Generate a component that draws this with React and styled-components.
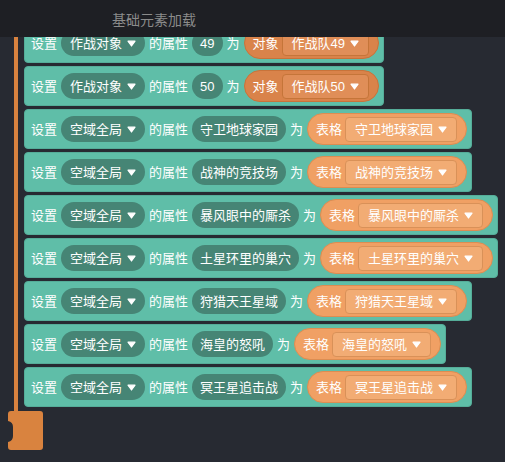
import React from "react";
import styled, { createGlobalStyle } from "styled-components";

const Global = createGlobalStyle`
  html, body { margin: 0; padding: 0; background: #272a32; }
  body { font-family: "Liberation Sans", "Noto Sans CJK SC", sans-serif; }
  * { box-sizing: border-box; }
`;

const Page = styled.div`
  width: 505px;
  height: 462px;
  display: flex;
  flex-direction: column;
  background: #272a32;
  overflow: hidden;
`;

const Header = styled.div`
  height: 37px;
  flex: none;
  background: #1e1f24;
  display: flex;
  align-items: center;
  padding-left: 112px;
  color: #8b8b8b;
  font-size: 14px;
  font-family: "Noto Sans CJK SC", sans-serif;
`;

const Viewport = styled.div`
  flex: 1;
  overflow: hidden;
  position: relative;
`;

const Canvas = styled.div`
  margin-top: -14px;
  padding-left: 14px;
  display: flex;
  flex-direction: column;
  align-items: flex-start;
`;

const Rail = styled.div`
  border-left: 4px solid #d9823f;
  padding-left: 6px;
  padding-bottom: 4px;
  display: flex;
  flex-direction: column;
  align-items: flex-start;
  gap: 3px;
`;

const Cap = styled.svg`
  display: block;
  margin-left: -6px;
`;

const Block = styled.div`
  height: 40px;
  display: inline-flex;
  align-items: center;
  gap: 4px;
  padding: 0 4px 0 6px;
  background: #5fbea8;
  border: 1px solid #55ad99;
  border-radius: 4px;
  color: #ffffff;
  font-size: 13px;
  font-family: "Liberation Sans", "Noto Sans CJK SC", sans-serif;
  white-space: nowrap;
`;

const Label = styled.span`
  line-height: 1;
`;

const DarkPill = styled.span`
  height: 26px;
  display: inline-flex;
  align-items: center;
  gap: 5px;
  padding: ${(p) => (p.$drop ? "0 9px 0 9px" : "0 8px")};
  background: #468575;
  border-radius: 13px;
  line-height: 1;
`;

const tones = {
  object: { bg: "#d9834a", border: "#c8733a", inner: "#e08e58", innerBorder: "#c57539" },
  table: { bg: "#f0a064", border: "#dc8d52", inner: "#f2ac74", innerBorder: "#d99158" },
};

const ValuePill = styled.span`
  height: 32px;
  display: inline-flex;
  align-items: center;
  gap: 3px;
  padding: 0 9px 0 8px;
  background: ${(p) => tones[p.$tone].bg};
  border: 1px solid ${(p) => tones[p.$tone].border};
  border-radius: 16px;
  line-height: 1;
`;

const InnerBox = styled.span`
  height: 25px;
  display: inline-flex;
  align-items: center;
  gap: 5px;
  padding: 0 9px 0 9px;
  background: ${(p) => tones[p.$tone].inner};
  border: 1px solid ${(p) => tones[p.$tone].innerBorder};
  border-radius: 4px;
  line-height: 1;
`;

const Arrow = () => (
  <svg width="9" height="7" viewBox="0 0 9 7">
    <path d="M1 1.2 H8 L4.5 6 Z" fill="#fff" stroke="#fff" strokeWidth="1.2" strokeLinejoin="round" />
  </svg>
);

const rows = [
  { target: "作战对象", prop: "49", kind: "对象", tone: "object", val: "作战队49" },
  { target: "作战对象", prop: "50", kind: "对象", tone: "object", val: "作战队50" },
  { target: "空域全局", prop: "守卫地球家园", kind: "表格", tone: "table", val: "守卫地球家园" },
  { target: "空域全局", prop: "战神的竞技场", kind: "表格", tone: "table", val: "战神的竞技场" },
  { target: "空域全局", prop: "暴风眼中的厮杀", kind: "表格", tone: "table", val: "暴风眼中的厮杀" },
  { target: "空域全局", prop: "土星环里的巢穴", kind: "表格", tone: "table", val: "土星环里的巢穴" },
  { target: "空域全局", prop: "狩猎天王星域", kind: "表格", tone: "table", val: "狩猎天王星域" },
  { target: "空域全局", prop: "海皇的怒吼", kind: "表格", tone: "table", val: "海皇的怒吼" },
  { target: "空域全局", prop: "冥王星追击战", kind: "表格", tone: "table", val: "冥王星追击战" },
];

export default function App() {
  return (
    <Page>
      <Global />
      <Header>基础元素加载</Header>
      <Viewport>
        <Canvas>
          <Rail>
            {rows.map((r, i) => (
              <Block key={i}>
                <Label>设置</Label>
                <DarkPill $drop>
                  {r.target}
                  <Arrow />
                </DarkPill>
                <Label>的属性</Label>
                <DarkPill>{r.prop}</DarkPill>
                <Label>为</Label>
                <ValuePill $tone={r.tone}>
                  {r.kind}
                  <InnerBox $tone={r.tone}>
                    {r.val}
                    <Arrow />
                  </InnerBox>
                </ValuePill>
              </Block>
            ))}
          </Rail>
          <Cap width="35" height="39" viewBox="0 0 35 39">
            <path
              d="M3 0 H32 Q35 0 35 3 V36 Q35 39 32 39 H3 Q0 39 0 36 V31 Q5 30 5 25 V16 Q5 11 0 10 V3 Q0 0 3 0 Z"
              fill="#d9833f"
            />
          </Cap>
        </Canvas>
      </Viewport>
    </Page>
  );
}
